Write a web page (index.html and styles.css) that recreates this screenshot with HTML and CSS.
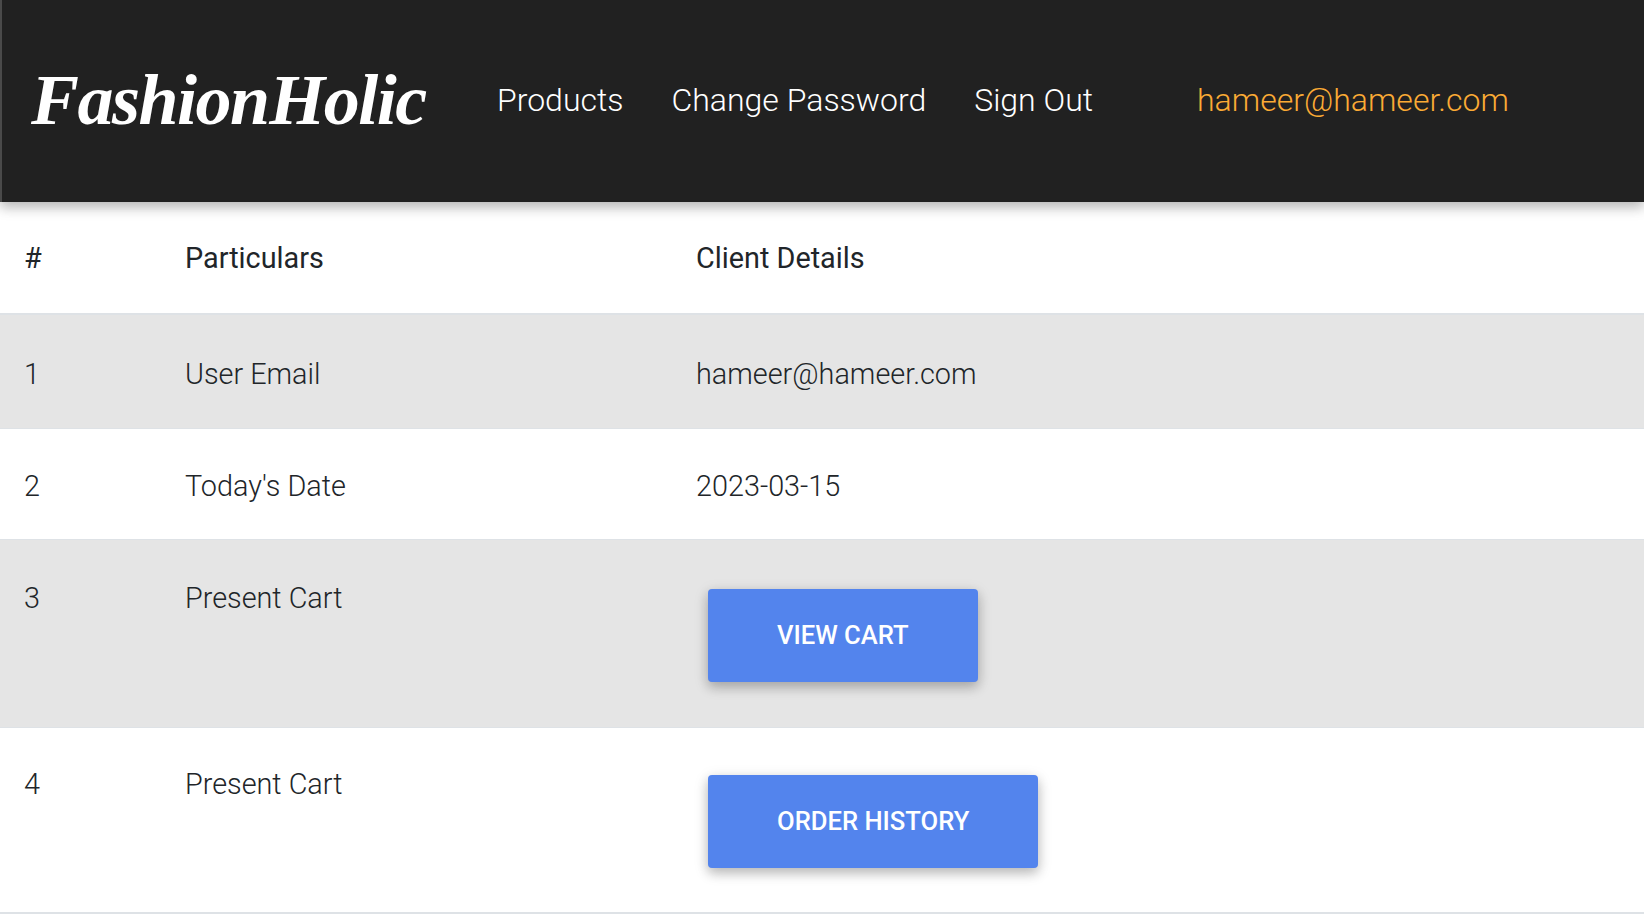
FILE: index.html
```html
<!DOCTYPE html>
<html lang="en">
<head>
<meta charset="UTF-8">
<meta name="viewport" content="width=device-width, initial-scale=1.0">
<title>Fashion Holic</title>
<link rel="stylesheet" href="styles.css">
</head>
<body>
<nav class="navbar">
    <a class="brand" href="#">Fashion Holic</a>
    <ul class="nav-links">
        <li><a href="#">Products</a></li>
        <li><a href="#">Change Password</a></li>
        <li><a href="#">Sign Out</a></li>
    </ul>
    <a class="nav-email" href="#">hameer@hameer.com</a>
</nav>

<table class="details">
    <colgroup>
        <col class="col-num">
        <col class="col-label">
        <col>
    </colgroup>
    <thead>
        <tr>
            <th>#</th>
            <th>Particulars</th>
            <th>Client Details</th>
        </tr>
    </thead>
    <tbody>
        <tr class="row-email">
            <td>1</td>
            <td>User Email</td>
            <td>hameer@hameer.com</td>
        </tr>
        <tr>
            <td>2</td>
            <td>Today's Date</td>
            <td>2023-03-15</td>
        </tr>
        <tr class="row-cart">
            <td>3</td>
            <td>Present Cart</td>
            <td><a class="btn" href="#">View Cart</a></td>
        </tr>
        <tr class="row-history">
            <td>4</td>
            <td>Present Cart</td>
            <td><a class="btn" href="#">Order History</a></td>
        </tr>
    </tbody>
</table>
</body>
</html>
```

FILE: styles.css
```css
body {
    font-family: Roboto, "Liberation Sans", sans-serif;
    font-weight: 300;
    color: #212529;
    background-color: #fff;
    margin: 0;
    padding: 0;
}
a {
    text-decoration: none;
}
.navbar {
    display: flex;
    align-items: center;
    height: 202px;
    box-sizing: border-box;
    padding-left: 29px;
    padding-bottom: 2px;
    background-color: #212121;
    border-left: 2px solid #4a4a4a;
    box-shadow: 0 5px 11px rgba(0, 0, 0, 0.18), 0 4px 15px rgba(0, 0, 0, 0.15);
    position: relative;
}
.brand {
    width: 466px;
    font-family: "Liberation Serif", serif;
    font-style: italic;
    font-weight: 700;
    font-size: 72px;
    letter-spacing: -1.5px;
    word-spacing: -16px;
    color: #fff;
}
.nav-links {
    display: flex;
    gap: 48px;
    list-style: none;
    margin: 0;
    padding: 0;
}
.nav-links a {
    font-size: 32px;
    color: #fff;
}
.nav-email {
    margin-left: 104px;
    font-size: 32px;
    color: #fbab35;
}
.details {
    width: 100%;
    border-collapse: collapse;
    table-layout: fixed;
    font-size: 28.8px;
}
.col-num {
    width: 161px;
}
.col-label {
    width: 511px;
}
.details th {
    height: 112px;
    padding: 0 24px;
    box-sizing: border-box;
    text-align: left;
    font-weight: 400;
    border-bottom: 2px solid #dee2e6;
}
.details td {
    padding: 41px 24px 37px;
    line-height: 32px;
    vertical-align: top;
    border-bottom: 1px solid #dee2e6;
}
.details tbody tr:nth-child(odd) {
    background-color: #e5e5e5;
}
.details .row-email td {
    padding-top: 43px;
    padding-bottom: 38px;
}
.details .row-cart td {
    padding-top: 42px;
    padding-bottom: 36px;
}
.details .row-history td {
    padding-top: 40px;
    padding-bottom: 36px;
    border-bottom-width: 2px;
}
.btn {
    display: inline-block;
    margin: 7px 12px 8px;
    padding: 0 69px;
    height: 93px;
    line-height: 93px;
    font-size: 25.6px;
    font-weight: 500;
    text-transform: uppercase;
    color: #fff;
    background-color: #5384ed;
    border-radius: 4px;
    box-shadow: 0 5px 11px rgba(0, 0, 0, 0.18), 0 4px 15px rgba(0, 0, 0, 0.15);
}
.row-cart .btn {
    margin-bottom: 9px;
}
```
